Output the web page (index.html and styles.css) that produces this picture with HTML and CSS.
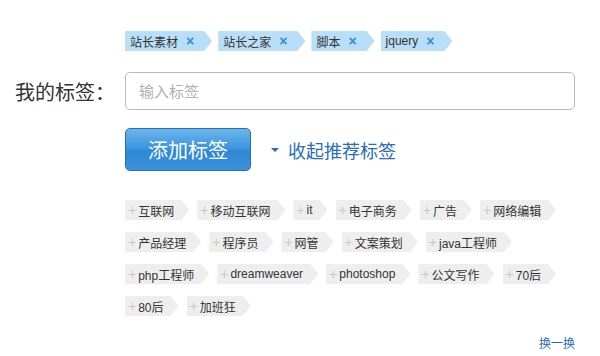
FILE: index.html
```html
<!DOCTYPE html>
<html lang="zh-CN">
<head>
  <meta charset="UTF-8">
  <title>我的标签</title>
  <link rel="stylesheet" href="styles.css">
</head>
<body>
  <div class="tag-box">
    <div class="row">
      <div class="label"></div>
      <div class="chosen">
        <span class="tag">站长素材<i class="del">×</i></span>
        <span class="tag">站长之家<i class="del">×</i></span>
        <span class="tag">脚本<i class="del">×</i></span>
        <span class="tag">jquery<i class="del">×</i></span>
      </div>
    </div>

    <div class="row input-row">
      <div class="label">我的标签：</div>
      <input class="tag-input" type="text" placeholder="输入标签">
    </div>

    <div class="row action-row">
      <div class="label"></div>
      <button class="add-btn">添加标签</button>
      <a class="toggle" href="#"><span class="caret"></span>收起推荐标签</a>
    </div>

    <div class="row">
      <div class="label"></div>
      <div class="recommend">
        <span class="rtag">互联网</span>
        <span class="rtag">移动互联网</span>
        <span class="rtag">it</span>
        <span class="rtag">电子商务</span>
        <span class="rtag">广告</span>
        <span class="rtag">网络编辑</span>
        <span class="rtag">产品经理</span>
        <span class="rtag">程序员</span>
        <span class="rtag">网管</span>
        <span class="rtag">文案策划</span>
        <span class="rtag">java工程师</span>
        <span class="rtag">php工程师</span>
        <span class="rtag">dreamweaver</span>
        <span class="rtag">photoshop</span>
        <span class="rtag">公文写作</span>
        <span class="rtag">70后</span>
        <span class="rtag">80后</span>
        <span class="rtag">加班狂</span>
      </div>
    </div>

    <div class="more"><a href="#">换一换</a></div>
  </div>
</body>
</html>
```

FILE: styles.css
```css
* {
  margin: 0;
  padding: 0;
  box-sizing: border-box;
}

body {
  background: #fff;
  font-family: "Liberation Sans", "Noto Sans CJK SC", sans-serif;
  color: #333;
}

.tag-box {
  width: 600px;
  padding-top: 31px;
}

.row {
  display: flex;
  align-items: center;
}

.label {
  width: 125px;
  flex: none;
  padding-left: 15px;
  font-size: 20px;
  color: #333;
}

/* chosen tags */
.chosen {
  display: flex;
  gap: 6px;
}

.tag {
  display: inline-flex;
  align-items: center;
  height: 20px;
  padding: 0 18px 0 5px;
  background: #b9def8;
  font-size: 12px;
  color: #333;
  clip-path: polygon(0 0, calc(100% - 8px) 0, 100% 50%, calc(100% - 8px) 100%, 0 100%);
}

.tag .del {
  font-style: normal;
  font-weight: bold;
  font-size: 14px;
  color: #3a8ad0;
  margin-left: 8px;
  cursor: pointer;
}

/* input */
.input-row {
  margin-top: 21px;
}

.tag-input {
  width: 450px;
  height: 38px;
  border: 1px solid #bbb;
  border-radius: 5px;
  padding: 0 13px;
  font-family: "Liberation Sans", "Noto Sans CJK SC", sans-serif;
  font-size: 15px;
  color: #333;
  outline: none;
}

.tag-input::placeholder {
  color: #b0b0b0;
}

/* add button + toggle */
.action-row {
  margin-top: 18px;
}

.add-btn {
  width: 126px;
  height: 43px;
  border: 1px solid #2a6fb0;
  border-radius: 5px;
  background: linear-gradient(#6cb6ec, #3a92dc 50%, #2f86d3 51%, #3b93dd);
  color: #fff;
  font-family: "Liberation Sans", "Noto Sans CJK SC", sans-serif;
  font-size: 20px;
  cursor: pointer;
}

.toggle {
  display: inline-flex;
  align-items: center;
  margin-left: 20px;
  font-size: 18px;
  color: #2a6db5;
  text-decoration: none;
}

.caret {
  width: 0;
  height: 0;
  border-left: 4px solid transparent;
  border-right: 4px solid transparent;
  border-top: 4px solid #2a6db5;
  margin-right: 9px;
}

/* recommended tags */
.recommend {
  width: 450px;
  margin-top: 29px;
  display: flex;
  flex-wrap: wrap;
  gap: 12px 8px;
}

.rtag {
  display: inline-flex;
  align-items: center;
  height: 20px;
  padding: 0 15px 0 3px;
  background: #eee;
  font-size: 12px;
  color: #333;
  clip-path: polygon(0 0, calc(100% - 8px) 0, 100% 50%, calc(100% - 8px) 100%, 0 100%);
}

.rtag::before {
  content: "+";
  color: #c8c8c8;
  font-size: 14px;
  line-height: 1;
  margin-right: 2px;
}

.more {
  text-align: right;
  padding-right: 25px;
  margin-top: 18px;
}

.more a {
  font-size: 12px;
  color: #2a6db5;
  text-decoration: none;
}
```
